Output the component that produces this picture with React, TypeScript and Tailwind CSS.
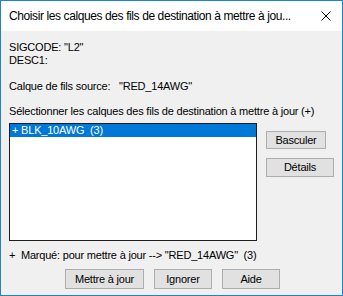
import React from "react";

const Btn = ({ label, className }: { label: string; className: string }) => (
  <button
    className={`flex items-center justify-center border border-[#adadad] bg-[#e1e1e1] text-[11px] leading-none text-black ${className}`}
  >
    {label}
  </button>
);

const App = () => {
  return (
    <div className="w-[343px] h-[296px] flex flex-col border border-[#1883d7] bg-[#f0f0f0] font-['Liberation_Sans',Arial,sans-serif] text-[11px] leading-[13px] tracking-[-0.2px] text-black">
      <div className="h-[30px] shrink-0 flex items-center justify-between bg-white pl-2 pr-[10px]">
        <span className="text-[12px] tracking-[-0.4px] whitespace-nowrap">
          Choisir les calques des fils de destination à mettre à jou...
        </span>
        <svg width="10" height="10" viewBox="0 0 10 10" className="mr-[1px] shrink-0">
          <path d="M0.5 0.5 L9.5 9.5 M9.5 0.5 L0.5 9.5" stroke="#000" strokeWidth="1" fill="none" />
        </svg>
      </div>
      <div className="flex flex-col px-2 pt-[10px]">
        <div>SIGCODE: "L2"</div>
        <div>DESC1:</div>
        <div className="mt-[13px] flex">
          <span className="w-[110px]">Calque de fils source:</span>
          <span>"RED_14AWG"</span>
        </div>
        <div className="mt-[12px]">Sélectionner les calques des fils de destination à mettre à jour (+)</div>
        <div className="mt-[5px] flex gap-[9px]">
          <div className="w-[248px] h-[118px] border border-[#1e1e1e] bg-white">
            <div className="h-[13px] bg-[#0078d7] pl-[2px] text-white whitespace-pre">+ BLK_10AWG  (3)</div>
          </div>
          <div className="flex flex-col pt-[8px] gap-[9px]">
            <Btn label="Basculer" className="w-[60px] h-[18px]" />
            <Btn label="Détails" className="w-[68px] h-[19px]" />
          </div>
        </div>
        <div className="mt-[8px] whitespace-pre">+  Marqué: pour mettre à jour --&gt; "RED_14AWG"  (3)</div>
        <div className="mt-[7px] flex justify-center gap-[10px] pl-[2px]">
          <Btn label="Mettre à jour" className="w-[79px] h-[20px]" />
          <Btn label="Ignorer" className="w-[58px] h-[20px]" />
          <Btn label="Aide" className="w-[58px] h-[20px]" />
        </div>
      </div>
    </div>
  );
};

export default App;
